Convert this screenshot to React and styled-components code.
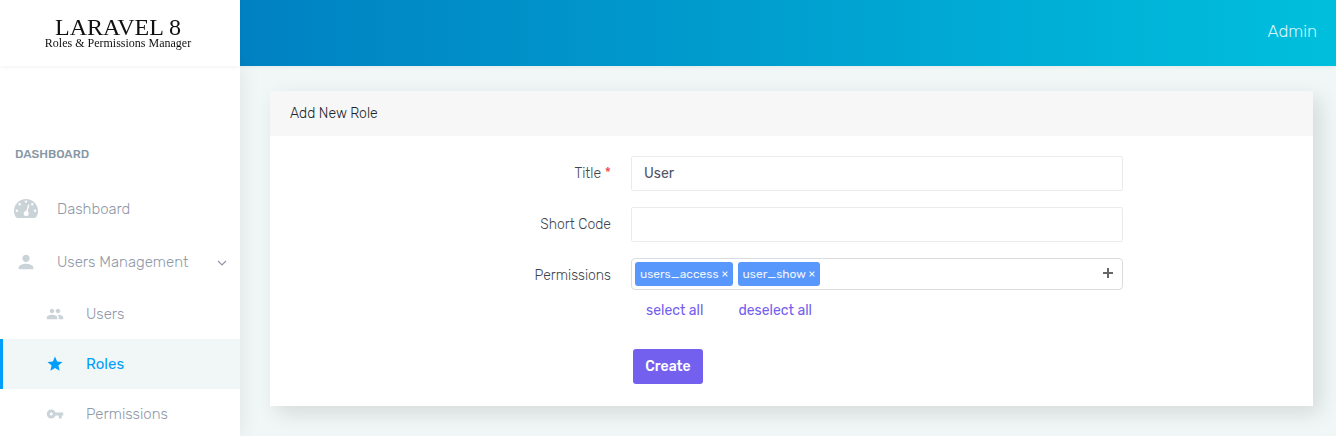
import React, { useState } from "react";
import styled, { createGlobalStyle } from "styled-components";
import { MdPerson, MdPeople, MdStar, MdVpnKey } from "react-icons/md";

const GlobalStyle = createGlobalStyle`
  *, *::before, *::after { box-sizing: border-box; }
  body {
    margin: 0;
    background: #f1f7f7;
    color: #3e4550;
    font-family: Rubik, Roboto, "Liberation Sans", sans-serif;
    font-size: 14px;
    font-weight: 300;
    line-height: 20px;
  }
  button, input { font: inherit; }
`;

const Page = styled.div`
  display: grid;
  grid-template-columns: 240px minmax(0, 1fr);
  grid-template-rows: 66px 1fr;
  height: 100vh;
`;

const Brand = styled.a`
  position: relative;
  z-index: 2;
  display: flex;
  flex-direction: column;
  align-items: center;
  padding: 16px 4px 0 0;
  background: #fff;
  box-shadow: 0 1px 4px rgba(0, 0, 0, 0.06);
  color: #111;
  text-decoration: none;
  font-family: "Liberation Serif", serif;
  font-weight: 400;
`;

const BrandName = styled.span`
  font-size: 24px;
  line-height: 22px;
`;

const BrandTagline = styled.span`
  font-size: 12px;
  line-height: 10px;
`;

const TopBar = styled.header`
  position: relative;
  z-index: 1;
  display: flex;
  align-items: center;
  justify-content: flex-end;
  padding: 0 19px;
  background: linear-gradient(to right, #0081c2 0%, #00bfdd 100%);
  box-shadow: 0 1px 4px rgba(0, 0, 0, 0.06);
`;

const UserLink = styled.a`
  color: #d4f4fa;
  font-size: 17px;
  font-weight: 300;
  line-height: 24px;
  text-decoration: none;
  padding-bottom: 4px;
`;

const Sidebar = styled.aside`
  position: relative;
  z-index: 1;
  min-height: 0;
  padding-top: 78px;
  overflow-y: auto;
  scrollbar-width: none;
  background: #fff;
  box-shadow: 1px 0 20px rgba(0, 0, 0, 0.08);
`;

const SectionTitle = styled.h2`
  margin: 0 0 18px;
  padding: 0 15px;
  color: #8797a5;
  font-size: 12px;
  font-weight: 500;
  line-height: 20px;
  text-transform: uppercase;
`;

const NavList = styled.ul`
  margin: 0;
  padding: 0;
  list-style: none;
`;

const navRow = `
  display: flex;
  align-items: center;
  width: 100%;
  border: 0;
  background: none;
  text-align: left;
  text-decoration: none;
  font-size: 15px;
  font-weight: 300;
  cursor: pointer;
`;

const NavLink = styled.a`
  ${navRow}
  height: 53px;
  padding: 0 12px;
  color: #8f98a8;
`;

const NavToggle = styled.button`
  ${navRow}
  height: 53px;
  margin-bottom: 1px;
  padding: 0 12px;
  color: #8f98a8;
`;

const NavIcon = styled.span`
  display: flex;
  justify-content: center;
  width: 28px;
  margin-right: 17px;
  color: ${(p) => (p.$active ? "#009efb" : "#c9d3d8")};
`;

const NavText = styled.span`
  flex: 1;
`;

const Chevron = styled.svg`
  width: 10px;
  height: 6px;
  margin: 3px 1px 0 0;
`;

const SubLink = styled.a`
  ${navRow}
  height: 50px;
  padding: 0 12px 0 38px;
  border-left: 3px solid ${(p) => (p.$active ? "#009efb" : "transparent")};
  background: ${(p) => (p.$active ? "#f1f7f7" : "transparent")};
  color: ${(p) => (p.$active ? "#009efb" : "#8f98a8")};
  font-weight: ${(p) => (p.$active ? 400 : 300)};
`;

const Main = styled.main`
  min-width: 0;
  padding: 25px 23px 30px 30px;
`;

const Card = styled.section`
  background: #fff;
  box-shadow: 7px 7px 20px rgba(0, 0, 0, 0.12);
`;

const CardHeader = styled.h1`
  margin: 0;
  padding: 13px 20px 12px;
  background: #f7f7f7;
  color: #212529;
  font-size: 14px;
  font-weight: 300;
  line-height: 20px;
`;

const Form = styled.form`
  padding: 20px 20px 22px;
`;

const FormRow = styled.div`
  display: flex;
  margin: 0 -10px 16px;

  &:last-child { margin-bottom: 0; }
`;

const LabelColumn = styled.div`
  flex: 0 0 calc(100% / 3);
  padding: 8px 10px 0;
  text-align: right;
`;

const FieldColumn = styled.div`
  flex: 0 0 50%;
  min-width: 0;
  padding: 0 10px;
`;

const Required = styled.span`
  color: #f6333f;
`;

const TextInput = styled.input`
  display: block;
  width: 100%;
  height: 35px;
  padding: 6px 12px;
  border: 1px solid #e9ecef;
  border-radius: 2px;
  background: #fff;
  color: #4f5467;
  font-size: 14px;
  font-weight: 400;
`;

const TagBox = styled.div`
  display: flex;
  align-items: center;
  gap: 5px;
  min-height: 32px;
  padding: 3px;
  border: 1px solid #dadcde;
  border-radius: 4px;
  background: #fff;
`;

const Tag = styled.span`
  display: flex;
  align-items: center;
  gap: 3px;
  height: 24px;
  padding: 0 5px;
  border-radius: 3px;
  background: #5897fb;
  color: #f0f5ff;
  font-size: 12px;
  font-weight: 400;
`;

const TagRemove = styled.button`
  display: flex;
  padding: 0;
  border: 0;
  background: none;
  color: inherit;
  cursor: pointer;

  svg { width: 6px; height: 6px; }
`;

const AddButton = styled.button`
  display: flex;
  margin-left: auto;
  padding: 0 6px 2px;
  border: 0;
  background: none;
  color: #666;
  cursor: pointer;

  svg { width: 10px; height: 10px; }
`;

const TagActions = styled.div`
  display: flex;
  gap: 5px;
  margin-bottom: 3px;
`;

const TextButton = styled.button`
  padding: 11px 15px 9px;
  border: 0;
  background: none;
  color: #7460ee;
  font-size: 14px;
  font-weight: 400;
  line-height: 20px;
  cursor: pointer;
`;

const SubmitColumn = styled(FieldColumn)`
  margin-left: calc(100% / 3);
  padding-left: 12px;
`;

const SubmitButton = styled.button`
  display: block;
  min-width: 70px;
  height: 35px;
  padding: 0 12px;
  border: 0;
  border-radius: 3px;
  background: #7460ee;
  color: #fff;
  font-size: 14px;
  font-weight: 500;
  cursor: pointer;
`;

function GaugeIcon() {
  return (
    <svg width="24" height="19" viewBox="0 0 24 19" aria-hidden="true">
      <path
        fill="currentColor"
        d="M12 0C5.4 0 0 5.3 0 11.9c0 2 .5 4 1.4 5.7.5.9 1.200 1.400 2.200 1.400h16.800c1 0 1.700-.5 2.200-1.400.9-1.700 1.400-3.700 1.400-5.700C24 5.300 18.600 0 12 0z"
      />
      <g fill="#fff">
        <circle cx="2.9" cy="11.800" r="1.200" />
        <circle cx="5.700" cy="5.300" r="1.200" />
        <circle cx="12" cy="2.600" r="1.200" />
        <circle cx="18.300" cy="5.300" r="1.200" />
        <circle cx="21.100" cy="11.800" r="1.200" />
        <circle cx="12.200" cy="14.600" r="2.500" />
      </g>
      <path d="M12.400 14L14.600 6.200" stroke="#fff" strokeWidth="1.400" strokeLinecap="round" />
    </svg>
  );
}

const subItems = [
  { label: "Users", icon: MdPeople },
  { label: "Roles", icon: MdStar, active: true },
  { label: "Permissions", icon: MdVpnKey },
];

const allPermissions = ["users_access", "user_show"];

export default function App() {
  const [open, setOpen] = useState(true);
  const [tags, setTags] = useState(allPermissions);

  return (
    <>
      <GlobalStyle />
      <Page>
        <Brand href="#">
          <BrandName>LARAVEL 8</BrandName>
          <BrandTagline>Roles &amp; Permissions Manager</BrandTagline>
        </Brand>
        <TopBar>
          <UserLink href="#">Admin</UserLink>
        </TopBar>
        <Sidebar>
          <SectionTitle>Dashboard</SectionTitle>
          <nav>
            <NavList>
              <li>
                <NavLink href="#">
                  <NavIcon><GaugeIcon /></NavIcon>
                  <NavText>Dashboard</NavText>
                </NavLink>
              </li>
              <li>
                <NavToggle type="button" aria-expanded={open} onClick={() => setOpen(!open)}>
                  <NavIcon><MdPerson size={22} /></NavIcon>
                  <NavText>Users Management</NavText>
                  <Chevron viewBox="0 0 10 6" fill="none" stroke="currentColor" strokeWidth="1.2" aria-hidden="true">
                    <path d="M1 1l4 4 4-4" />
                  </Chevron>
                </NavToggle>
                {open && (
                  <NavList>
                    {subItems.map(({ label, icon: Icon, active }) => (
                      <li key={label}>
                        <SubLink href="#" $active={active} aria-current={active ? "page" : undefined}>
                          <NavIcon $active={active}><Icon size={18} /></NavIcon>
                          <NavText>{label}</NavText>
                        </SubLink>
                      </li>
                    ))}
                  </NavList>
                )}
              </li>
            </NavList>
          </nav>
        </Sidebar>
        <Main>
          <Card>
            <CardHeader>Add New Role</CardHeader>
            <Form onSubmit={(e) => e.preventDefault()}>
              <FormRow>
                <LabelColumn>
                  <label htmlFor="title">Title <Required>*</Required></label>
                </LabelColumn>
                <FieldColumn>
                  <TextInput id="title" type="text" defaultValue="User" required />
                </FieldColumn>
              </FormRow>
              <FormRow>
                <LabelColumn>
                  <label htmlFor="short-code">Short Code</label>
                </LabelColumn>
                <FieldColumn>
                  <TextInput id="short-code" type="text" />
                </FieldColumn>
              </FormRow>
              <FormRow>
                <LabelColumn id="permissions-label">Permissions</LabelColumn>
                <FieldColumn>
                  <TagBox role="group" aria-labelledby="permissions-label">
                    {tags.map((tag) => (
                      <Tag key={tag}>
                        {tag}
                        <TagRemove
                          type="button"
                          aria-label={`Remove ${tag}`}
                          onClick={() => setTags(tags.filter((t) => t !== tag))}
                        >
                          <svg viewBox="0 0 6 6" stroke="currentColor" strokeWidth="1.2" aria-hidden="true">
                            <path d="M.6.6l4.8 4.8M5.4.6L.6 5.4" />
                          </svg>
                        </TagRemove>
                      </Tag>
                    ))}
                    <AddButton type="button" aria-label="Add permission">
                      <svg viewBox="0 0 10 10" stroke="currentColor" strokeWidth="2" aria-hidden="true">
                        <path d="M5 0v10M0 5h10" />
                      </svg>
                    </AddButton>
                  </TagBox>
                  <TagActions>
                    <TextButton type="button" onClick={() => setTags(allPermissions)}>select all</TextButton>
                    <TextButton type="button" onClick={() => setTags([])}>deselect all</TextButton>
                  </TagActions>
                </FieldColumn>
              </FormRow>
              <FormRow>
                <SubmitColumn>
                  <SubmitButton type="submit">Create</SubmitButton>
                </SubmitColumn>
              </FormRow>
            </Form>
          </Card>
        </Main>
      </Page>
    </>
  );
}
